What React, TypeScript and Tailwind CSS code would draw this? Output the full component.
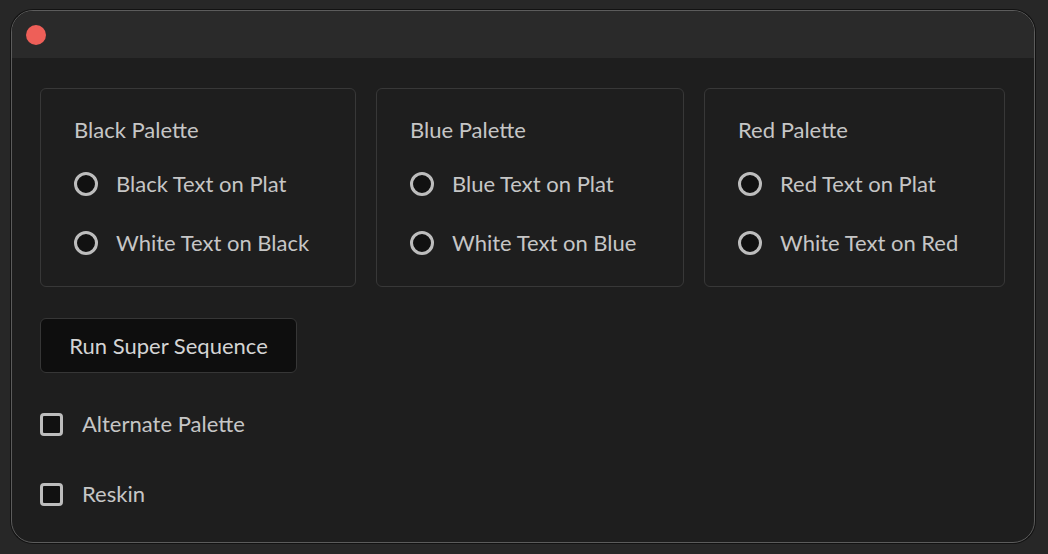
import React from "react";

const font = { fontFamily: "Lato, 'Open Sans', sans-serif" };

function Radio({ label }: { label: string }) {
  return (
    <label className="flex h-[24px] items-center gap-[18px]">
      <span className="h-[24px] w-[24px] shrink-0 rounded-full border-[3px] border-[#bdbdbd] bg-[#111111]" />
      <span className="text-[22px] leading-none text-[#c6c6c6]">{label}</span>
    </label>
  );
}

function PaletteCard({ title, options, width }: { title: string; options: string[]; width: string }) {
  return (
    <div className={`${width} h-[199px] rounded-[6px] border border-[#383838] pl-[33px] pt-[30px]`}>
      <div className="text-[22px] leading-none text-[#c6c6c6]">{title}</div>
      <div className="mt-[31px] flex flex-col gap-[35px]">
        {options.map((o) => (
          <Radio key={o} label={o} />
        ))}
      </div>
    </div>
  );
}

function Checkbox({ label }: { label: string }) {
  return (
    <label className="flex h-[24px] items-center gap-[19px]">
      <span className="h-[23px] w-[23px] shrink-0 rounded-[4px] border-[3px] border-[#bdbdbd] bg-[#111111]" />
      <span className="text-[22px] leading-none text-[#c6c6c6]">{label}</span>
    </label>
  );
}

export default function App() {
  return (
    <div className="h-[554px] w-[1048px] bg-[#272727] pb-[11px] pl-[11px] pr-[13px] pt-[10px]" style={font}>
      <div className="flex h-full flex-col overflow-hidden rounded-[22px] border border-[#5c5c5c] bg-[#1e1e1e] shadow-[0_0_0_1px_#121212]">
        <div className="flex h-[47px] shrink-0 items-center bg-[#2a2a2a] pl-[14px]">
          <span className="h-[20px] w-[20px] rounded-full bg-[#ee5f58]" />
        </div>
        <div className="px-[28px] pt-[30px]">
          <div className="flex gap-[20px]">
            <PaletteCard width="w-[316px]" title="Black Palette" options={["Black Text on Plat", "White Text on Black"]} />
            <PaletteCard width="w-[308px]" title="Blue Palette" options={["Blue Text on Plat", "White Text on Blue"]} />
            <PaletteCard width="w-[301px]" title="Red Palette" options={["Red Text on Plat", "White Text on Red"]} />
          </div>
          <button className="mt-[31px] flex h-[55px] w-[257px] items-center justify-center rounded-[6px] border border-[#363636] bg-[#0e0e0e] text-[22px] leading-none text-[#d4d4d4]">
            Run Super Sequence
          </button>
          <div className="mt-[39px] flex flex-col gap-[46px]">
            <Checkbox label="Alternate Palette" />
            <Checkbox label="Reskin" />
          </div>
        </div>
      </div>
    </div>
  );
}
